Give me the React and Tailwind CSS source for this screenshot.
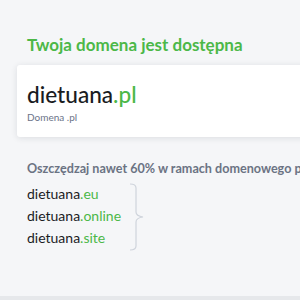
export default function App() {
  const tlds = ["eu", "online", "site"];

  return (
    <div className="h-[300px] w-[300px] overflow-hidden bg-[#f5f6f8] font-['Lato',sans-serif]">
      <div className="flex h-[296px] flex-col">
        <h1 className="ml-[27px] mt-[33px] whitespace-nowrap text-[17px] font-bold leading-[24px] text-[#4cb848]">
          Twoja domena jest dostępna
        </h1>

        <div className="ml-[17px] mt-[8px] h-[72px] w-[320px] rounded-[3px] bg-white pl-[10px] pt-[15px] shadow-[0_1px_6px_rgba(30,40,60,0.12)]">
          <p className="text-[22.6px] font-medium leading-[30px] text-[#1a1c1f]">
            dietuana<span className="text-[#4cb848]">.pl</span>
          </p>
          <p className="mt-[1px] text-[10px] leading-[12px] text-[#6b7488]">Domena .pl</p>
        </div>

        <p className="ml-[27px] mt-[23px] whitespace-nowrap text-[12.6px] font-bold leading-[18px] text-[#6b7383]">
          Oszczędzaj nawet 60% w ramach domenowego pakietu
        </p>

        <div className="ml-[27px] mt-[6px] flex items-start gap-[8px]">
          <div className="flex flex-col gap-[2px]">
            {tlds.map((tld) => (
              <p key={tld} className="text-[14px] leading-[20px] text-[#1a1c1f]">
                dietuana<span className="text-[#4cb848]">.{tld}</span>
              </p>
            ))}
          </div>
          <svg width="18" height="68" viewBox="0 0 18 68" className="-mt-[1px]" fill="none">
            <path
              d="M1 1 Q7 1 7 5 L7 29 Q7 33 14 34 Q7 35 7 39 L7 63 Q7 67 1 67"
              stroke="#cfd4dc"
              strokeWidth="1.2"
            />
          </svg>
        </div>
      </div>
      <div className="h-[4px] bg-[#e6e8eb]" />
    </div>
  );
}
